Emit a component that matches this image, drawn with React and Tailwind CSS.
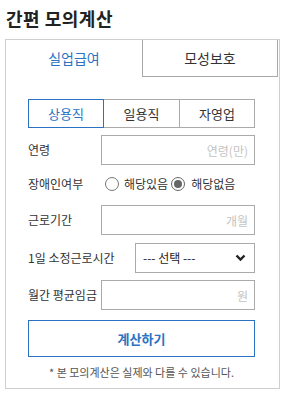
export default function App() {
  return (
    <div className="w-[284px] h-[393px] bg-white font-['Noto_Sans_CJK_KR',sans-serif] text-[#333] overflow-hidden">
      <h1 className="pl-[6px] pt-[5px] h-[39px] text-[18px] leading-[26px] font-bold text-[#222] tracking-[0.5px]">간편 모의계산</h1>
      <div className="ml-[5px] w-[275px] h-[350px] border border-[#cfcfcf]">
        <div className="flex h-[37px]">
          <div className="w-[136px] flex items-center justify-center text-[14px] text-[#2b73c2]">실업급여</div>
          <div className="w-[136px] border-l border-r border-b border-[#a8a8a8] flex items-center justify-center text-[14px] text-[#333]">모성보호</div>
        </div>
        <div className="pl-[22px] pt-[22px] w-[249px]">
          <div className="flex h-[29px] text-[13px]">
            <div className="w-[76px] border border-[#2b73c2] flex items-center justify-center text-[#2b73c2]">상용직</div>
            <div className="w-[76px] border-y border-r border-[#aaa] flex items-center justify-center">일용직</div>
            <div className="w-[75px] border-y border-r border-[#aaa] flex items-center justify-center">자영업</div>
          </div>
          <div className="mt-[7px] flex items-center justify-between h-[30px]">
            <span className="text-[12px]">연령</span>
            <input className="w-[154px] h-[30px] border border-[#aaa] text-right pr-[6px] text-[12px] outline-none placeholder:text-[#c4c4c4]" placeholder="연령(만)" />
          </div>
          <div className="mt-[8px] flex items-center h-[21px] text-[12px]">
            <span className="w-[77px]">장애인여부</span>
            <span className="w-[14px] h-[14px] rounded-full border border-[#777] bg-white"></span>
            <span className="ml-[5px] mr-[3px]">해당있음</span>
            <span className="w-[14px] h-[14px] rounded-full border border-[#666] flex items-center justify-center">
              <span className="w-[8px] h-[8px] rounded-full bg-[#666]"></span>
            </span>
            <span className="ml-[6px]">해당없음</span>
          </div>
          <div className="mt-[11px] flex items-center justify-between h-[30px]">
            <span className="text-[12px]">근로기간</span>
            <input className="w-[154px] h-[30px] border border-[#aaa] text-right pr-[6px] text-[12px] outline-none placeholder:text-[#c4c4c4]" placeholder="개월" />
          </div>
          <div className="mt-[8px] flex items-center justify-between h-[30px]">
            <span className="text-[12px]">1일 소정근로시간</span>
            <div className="w-[120px] h-[30px] border border-[#aaa] flex items-center justify-between pl-[7px] pr-[8px] text-[12px] text-[#222]">
              <span>--- 선택 ---</span>
              <svg width="11" height="8" viewBox="0 0 11 8">
                <path d="M1.5 1.5 L5.5 5.5 L9.5 1.5" fill="none" stroke="#222" strokeWidth="2.4" />
              </svg>
            </div>
          </div>
          <div className="mt-[7px] flex items-center justify-between h-[30px]">
            <span className="text-[12px]">월간 평균임금</span>
            <input className="w-[154px] h-[30px] border border-[#aaa] text-right pr-[6px] text-[12px] outline-none placeholder:text-[#c4c4c4]" placeholder="원" />
          </div>
          <div className="mt-[10px] h-[37px] border border-[#2b73c2] flex items-center justify-center text-[13px] font-bold text-[#2b73c2]">계산하기</div>
          <p className="mt-[7px] text-center text-[11px] leading-[16px] text-[#555]">* 본 모의계산은 실제와 다를 수 있습니다.</p>
        </div>
      </div>
    </div>
  );
}
